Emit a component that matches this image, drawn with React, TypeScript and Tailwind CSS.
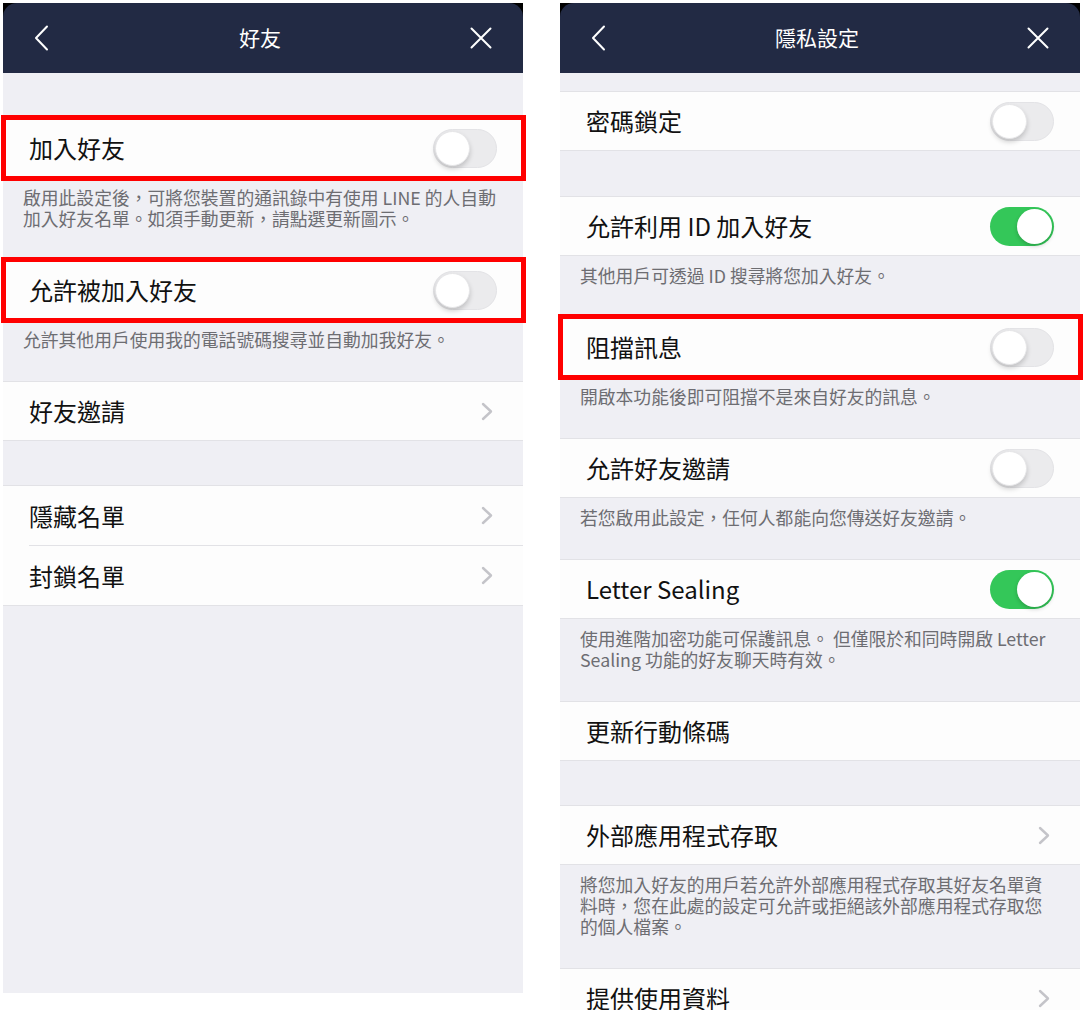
import type { ReactNode } from 'react';

type Accessory = 'on' | 'off' | 'chevron' | 'none';

function BackIcon() {
  return (
    <svg width="16" height="26" viewBox="0 0 16 26" fill="none" stroke="white" strokeWidth="2" strokeLinecap="round" strokeLinejoin="round">
      <path d="M13 1.5 2 13l11 11.5" />
    </svg>
  );
}

function CloseIcon() {
  return (
    <svg width="22" height="22" viewBox="0 0 22 22" fill="none" stroke="white" strokeWidth="2" strokeLinecap="round">
      <path d="M1.5 1.5l19 19M20.5 1.5l-19 19" />
    </svg>
  );
}

function Chevron() {
  return (
    <svg width="13" height="19" viewBox="0 0 13 19" fill="none" stroke="#c4c4c9" strokeWidth="2.4" strokeLinecap="round" strokeLinejoin="round">
      <path d="M2 2l8 7.5L2 17" />
    </svg>
  );
}

function Toggle({ on }: { on: boolean }) {
  return on ? (
    <div className="flex h-[39px] w-[64px] items-center justify-end rounded-full bg-[#34c759] p-[2px]">
      <span className="h-[35px] w-[35px] rounded-full bg-white shadow-[0_2px_4px_rgba(0,0,0,0.2)]" />
    </div>
  ) : (
    <div className="flex h-[39px] w-[64px] items-center rounded-full border border-[#e3e3e6] bg-[#ebebed] p-[1px]">
      <span className="h-[35px] w-[35px] rounded-full border border-[#e6e6e8] bg-white shadow-[0_3px_5px_rgba(0,0,0,0.18)]" />
    </div>
  );
}

function Header({ title }: { title: string }) {
  return (
    <div className="bg-black">
      <div className="flex h-[70px] items-center justify-between rounded-t-[14px] bg-[#222a44] px-[31px]">
        <BackIcon />
        <span className="text-[21px] text-white">{title}</span>
        <CloseIcon />
      </div>
    </div>
  );
}

function Row({ label, accessory, highlight }: { label: string; accessory: Accessory; highlight?: boolean }) {
  return (
    <div className="relative">
      <div className="flex h-[60px] items-center justify-between border-y border-[#e2e2e6] bg-[#fdfdfd] pl-[26px] pr-[26px]">
        <span className="text-[24px] leading-none text-[#111]">{label}</span>
        {accessory === 'on' && <Toggle on />}
        {accessory === 'off' && <Toggle on={false} />}
        {accessory === 'chevron' && (
          <span className="pr-[3px]">
            <Chevron />
          </span>
        )}
      </div>
      {highlight && (
        <div className="pointer-events-none absolute -top-[3px] -bottom-[3px] -left-[2px] -right-[3px] z-10 border-[5px] border-[#ff0000]" />
      )}
    </div>
  );
}

function Note({ lines }: { lines: string[] }) {
  return (
    <div className="px-[20px] pt-[9px] pb-[31px] text-[17.8px] leading-[21px] text-[#6d6d72]">
      {lines.map((l) => (
        <div key={l} className="whitespace-nowrap">
          {l}
        </div>
      ))}
    </div>
  );
}

function Gap({ h }: { h: string }) {
  return <div className={h} />;
}

function Panel({ children, className }: { children: ReactNode; className: string }) {
  return <div className={`flex w-[520px] flex-col bg-[#efeff4] ${className}`}>{children}</div>;
}

export default function App() {
  return (
    <div className="flex h-[1010px] w-[1083px] items-start gap-[37px] overflow-hidden bg-white pt-[3px] pl-[3px] font-['Noto_Sans_CJK_TC',sans-serif]">
      <Panel className="h-[990px]">
        <Header title="好友" />
        <Gap h="h-[45px]" />
        <Row label="加入好友" accessory="off" highlight />
        <Note lines={['啟用此設定後，可將您裝置的通訊錄中有使用 LINE 的人自動', '加入好友名單。如須手動更新，請點選更新圖示。']} />
        <Row label="允許被加入好友" accessory="off" highlight />
        <Note lines={['允許其他用戶使用我的電話號碼搜尋並自動加我好友。']} />
        <Row label="好友邀請" accessory="chevron" />
        <Gap h="h-[44px]" />
        <div className="border-y border-[#e2e2e6] bg-[#fdfdfd]">
          <div className="flex h-[59px] items-center justify-between px-[26px]">
            <span className="text-[24px] leading-none text-[#111]">隱藏名單</span>
            <span className="pr-[3px]">
              <Chevron />
            </span>
          </div>
          <div className="ml-[26px] h-px bg-[#e2e2e6]" />
          <div className="flex h-[59px] items-center justify-between px-[26px]">
            <span className="text-[24px] leading-none text-[#111]">封鎖名單</span>
            <span className="pr-[3px]">
              <Chevron />
            </span>
          </div>
        </div>
      </Panel>

      <Panel className="h-[1100px] shrink-0">
        <Header title="隱私設定" />
        <Gap h="h-[18px]" />
        <Row label="密碼鎖定" accessory="off" />
        <Gap h="h-[45px]" />
        <Row label="允許利用 ID 加入好友" accessory="on" />
        <Note lines={['其他用戶可透過 ID 搜尋將您加入好友。']} />
        <Row label="阻擋訊息" accessory="off" highlight />
        <Note lines={['開啟本功能後即可阻擋不是來自好友的訊息。']} />
        <Row label="允許好友邀請" accessory="off" />
        <Note lines={['若您啟用此設定，任何人都能向您傳送好友邀請。']} />
        <Row label="Letter Sealing" accessory="on" />
        <Note lines={['使用進階加密功能可保護訊息。 但僅限於和同時開啟 Letter', 'Sealing 功能的好友聊天時有效。']} />
        <Row label="更新行動條碼" accessory="none" />
        <Gap h="h-[44px]" />
        <Row label="外部應用程式存取" accessory="chevron" />
        <Note
          lines={[
            '將您加入好友的用戶若允許外部應用程式存取其好友名單資',
            '料時，您在此處的設定可允許或拒絕該外部應用程式存取您',
            '的個人檔案。',
          ]}
        />
        <Row label="提供使用資料" accessory="chevron" />
      </Panel>
    </div>
  );
}
